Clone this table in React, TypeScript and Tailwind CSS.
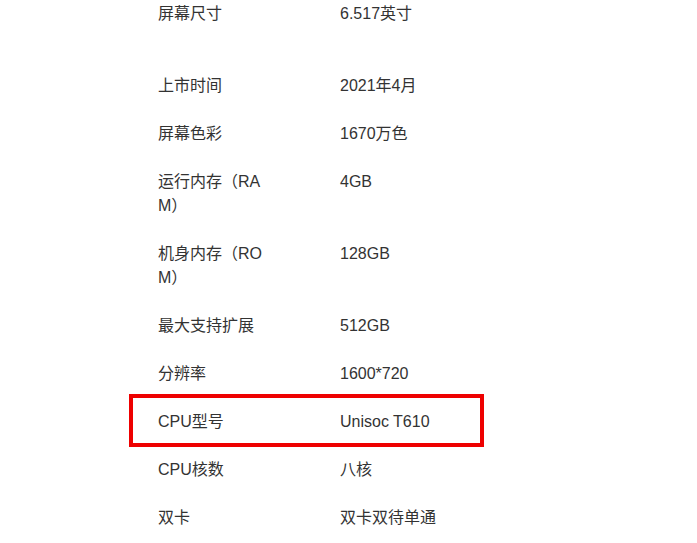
import React from "react";

type Spec = { label: string; value: string; tall?: boolean; marked?: boolean };

const specs: Spec[] = [
  { label: "屏幕尺寸", value: "6.517英寸", tall: true },
  { label: "上市时间", value: "2021年4月" },
  { label: "屏幕色彩", value: "1670万色" },
  { label: "运行内存（RAM）", value: "4GB" },
  { label: "机身内存（ROM）", value: "128GB" },
  { label: "最大支持扩展", value: "512GB" },
  { label: "分辨率", value: "1600*720" },
  { label: "CPU型号", value: "Unisoc T610", marked: true },
  { label: "CPU核数", value: "八核" },
  { label: "双卡", value: "双卡双待单通" },
];

function SpecRow({ spec }: { spec: Spec }) {
  return (
    <div className={spec.tall ? "relative flex min-h-[72px] py-3" : "relative flex py-3"}>
      <div className="mr-[74px] w-[108px] shrink-0 break-all">{spec.label}</div>
      <div>{spec.value}</div>
      {spec.marked && (
        <div className="pointer-events-none absolute left-[-29px] top-[-4px] h-[53px] w-[355px] border-4 border-[#ee0000]" />
      )}
    </div>
  );
}

export default function App() {
  return (
    <div
      className="h-[543px] w-[697px] overflow-hidden bg-white text-[16px] leading-6 text-[#333333]"
      style={{ fontFamily: '"Liberation Sans", "Noto Sans CJK SC", sans-serif' }}
    >
      <div className="ml-[158px] mt-[-10px]">
        {specs.map((s) => (
          <SpecRow key={s.label} spec={s} />
        ))}
      </div>
    </div>
  );
}
